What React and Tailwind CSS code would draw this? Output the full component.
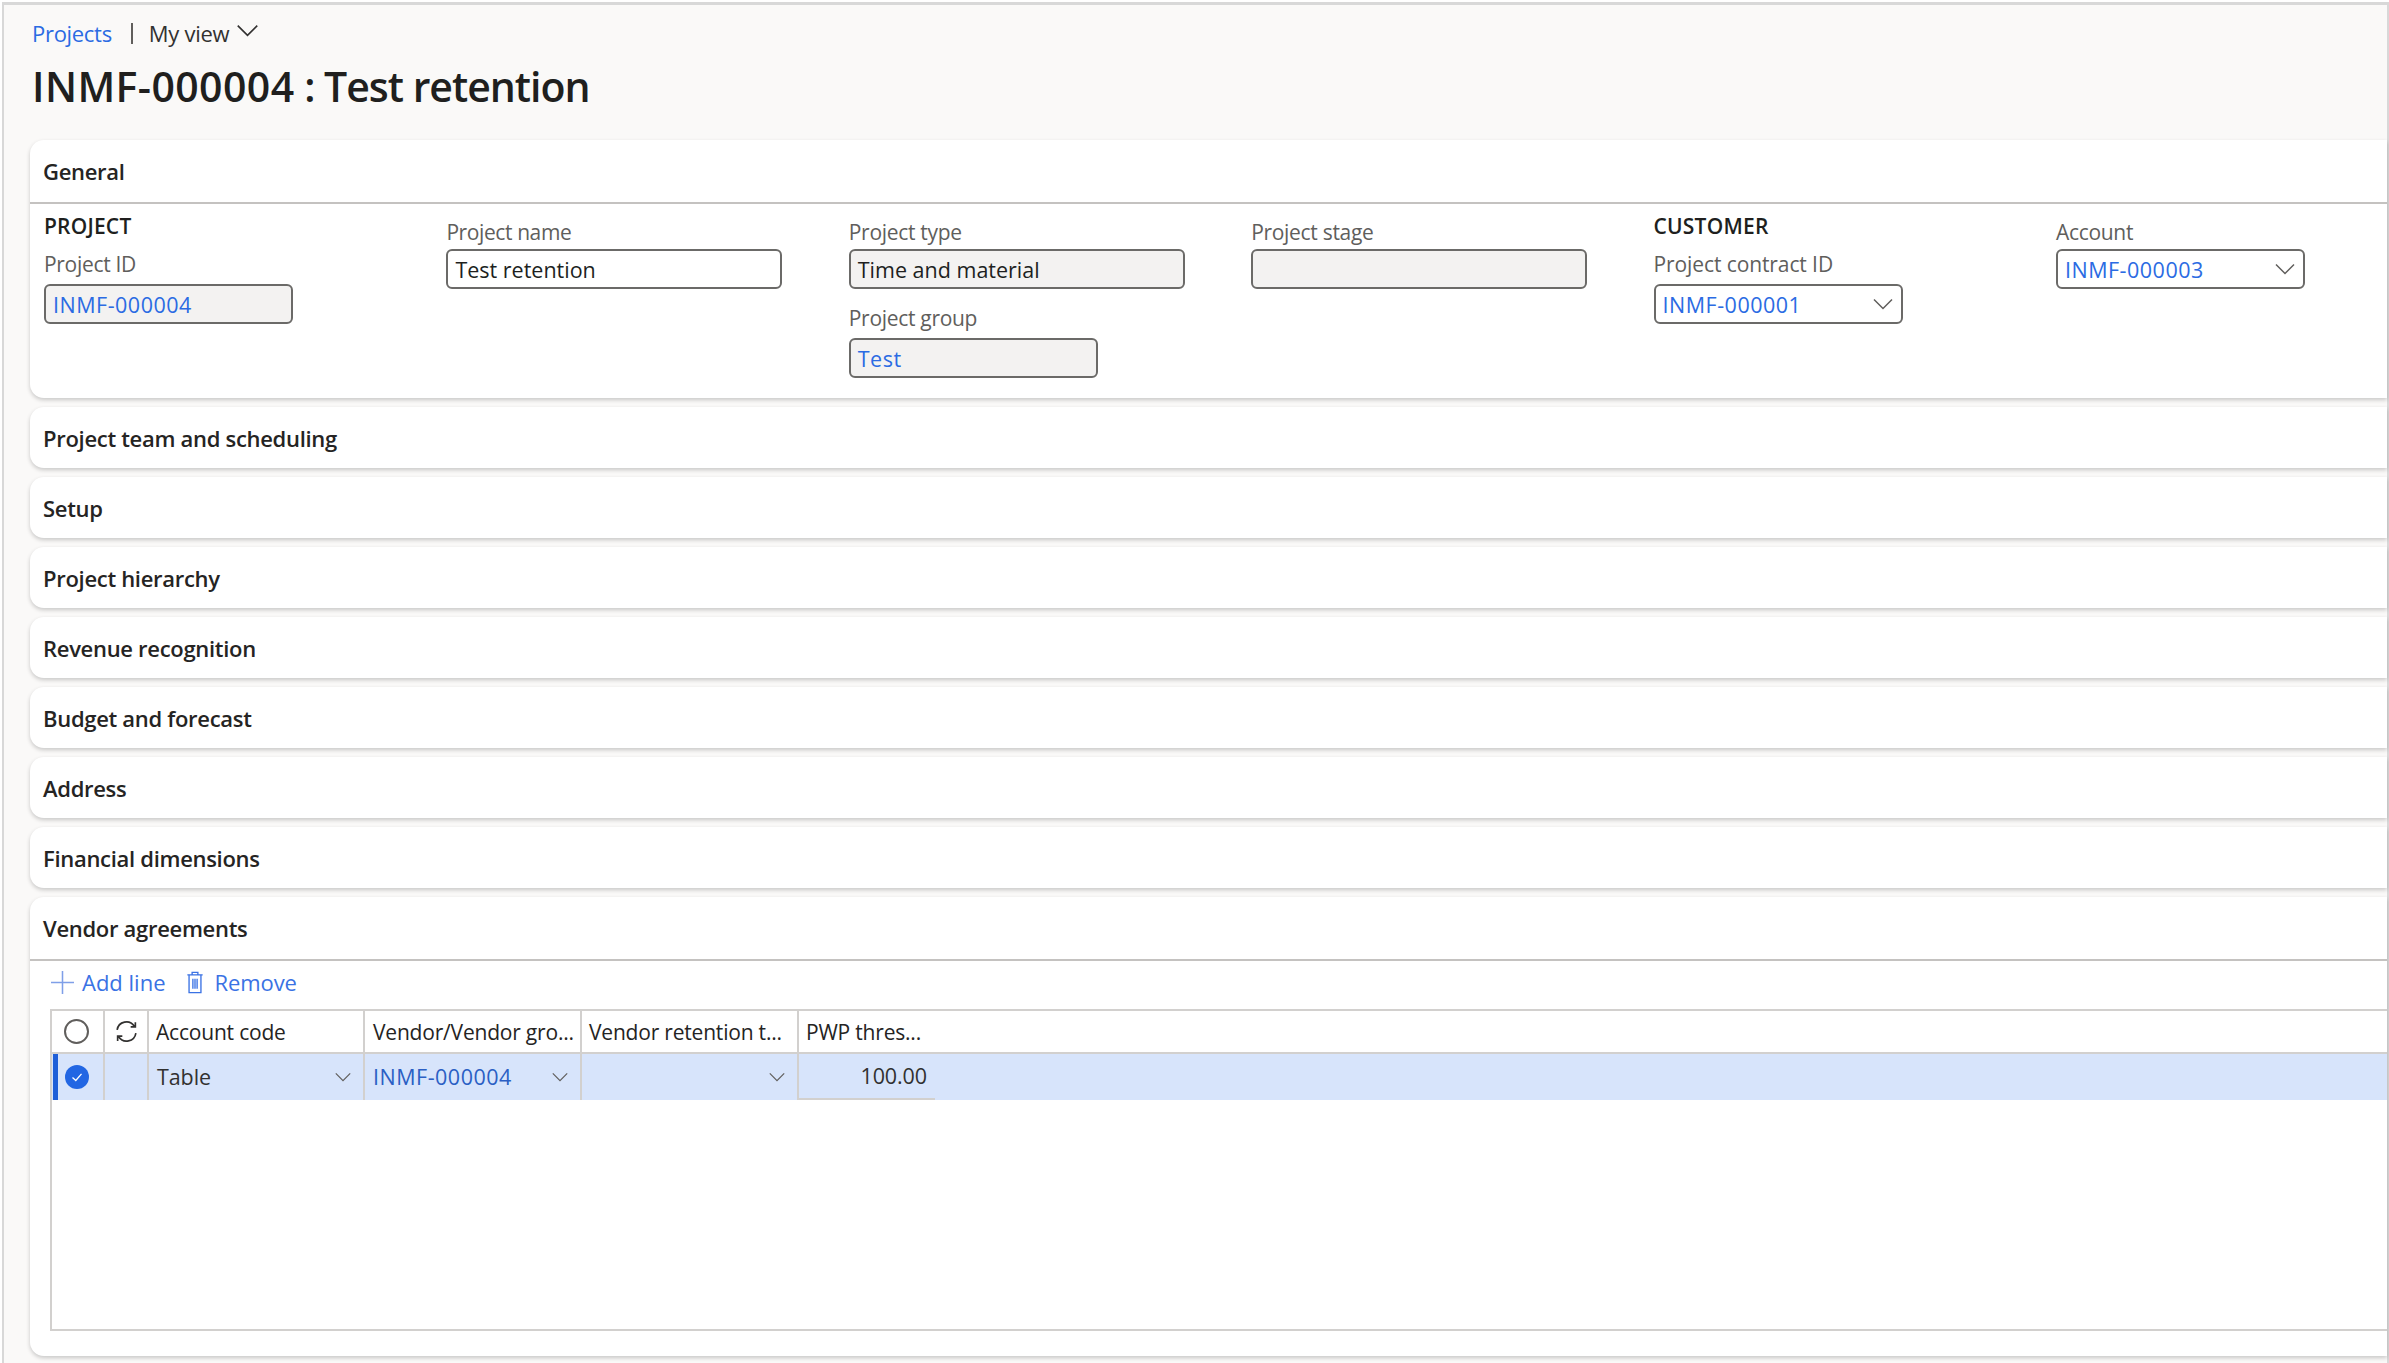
const sections = [
  'Project team and scheduling',
  'Setup',
  'Project hierarchy',
  'Revenue recognition',
  'Budget and forecast',
  'Address',
  'Financial dimensions',
];

function Chevron({ className }) {
  return (
    <svg viewBox="0 0 20 12" className={className} fill="none" stroke="currentColor" strokeWidth="1.5">
      <path d="M1 1.5 L10 10.5 L19 1.5" />
    </svg>
  );
}

function Field({ label, value, link, readOnly, select, wide, labelGap = 'mt-[7px]', labelClass = 'tracking-[-0.3px]' }) {
  return (
    <div>
      <div className={`h-[26px] text-[21px] leading-[26px] text-[#605e5c] ${labelClass}`}>{label}</div>
      <div
        className={`${labelGap} ${wide ? 'w-[336px]' : 'w-[249px]'} h-[40px] rounded-[6px] border-2 border-[#6b6a68] pl-[7px] pr-[8px] pt-[3px] flex items-center justify-between ${
          readOnly ? 'bg-[#f3f2f1]' : 'bg-white'
        }`}
      >
        <span className={`text-[21.5px] ${link ? 'text-[#2b6be3] tracking-[0.5px]' : 'text-[#201f1e]'}`}>{value}</span>
        {select && <Chevron className="w-[20px] h-[12px] -mt-[3px] text-[#605e5c]" />}
      </div>
    </div>
  );
}

function GroupTitle({ children }) {
  return <div className="h-[26px] text-[21px] leading-[26px] font-semibold tracking-[0.2px] text-[#201f1e]">{children}</div>;
}

function CardTitle({ children, border }) {
  return (
    <div className={`pl-[13px] flex items-center text-[22px] font-semibold tracking-[-0.3px] text-[#252423] ${border ? 'h-[64px] border-b-2 border-[#c4c2c0]' : 'h-[61px] pt-[2px]'}`}>
      {children}
    </div>
  );
}

function Card({ children, className = '' }) {
  return (
    <div className={`bg-white rounded-l-[14px] shadow-[0_2px_4px_rgba(0,0,0,0.2)] ${className}`}>{children}</div>
  );
}

function HeaderCell({ children, border = true, className = 'pl-[7px]' }) {
  return (
    <div className={`pt-[3px] flex items-center text-[21px] font-medium tracking-[-0.2px] text-[#252423] whitespace-nowrap ${className} ${border ? 'border-r-2 border-[#d2d0ce]' : ''}`}>
      {children}
    </div>
  );
}

function BodyCell({ children, border = true, className = '' }) {
  return (
    <div className={`flex items-center justify-between text-[21.5px] tracking-[-0.1px] text-[#323130] ${border ? 'border-r-2 border-[#d2d0ce]' : ''} ${className}`}>
      {children}
    </div>
  );
}

export default function App() {
  return (
    <div className="w-[2389px] h-[1363px] overflow-hidden bg-white pl-[2px] pt-[2px] font-['Open_Sans',sans-serif]">
      <div className="h-[1361px] bg-[#faf9f8] border-l-2 border-t-[3px] border-r-2 border-[#d8d8d8] pt-[14px]">
        <div className="pl-[28px] flex items-center h-[28px] text-[22px] tracking-[-0.3px] text-[#323130]">
          <span className="text-[#2b6be3]">Projects</span>
          <span className="ml-[19px] w-[2px] h-[21px] bg-[#605e5c]" />
          <span className="ml-[16px]">My view</span>
          <Chevron className="ml-[7px] w-[23px] h-[13px] -mt-[6px]" />
        </div>
        <h1 className="pl-[28px] mt-[11px] h-[56px] text-[41px] leading-[56px] font-semibold text-[#201f1e]">
          <span className="tracking-[0.4px]">INMF-000004</span>
          <span className="tracking-[-1px]"> : Test retention</span>
        </h1>
        <div className="ml-[26px] mt-[26px] flex flex-col gap-[9px]">
          <Card className="h-[258px]">
            <CardTitle border>General</CardTitle>
            <div className="pl-[14px] grid grid-cols-[repeat(6,402.4px)]">
              <div className="pt-[9px]">
                <GroupTitle>PROJECT</GroupTitle>
                <div className="mt-[12px]">
                  <Field label="Project ID" value="INMF-000004" link readOnly />
                </div>
              </div>
              <div className="pt-[15px]">
                <Field label="Project name" value="Test retention" wide labelGap="mt-[4px]" labelClass="tracking-[-0.4px]" />
              </div>
              <div className="pt-[15px]">
                <Field label="Project type" value="Time and material" readOnly wide labelGap="mt-[4px]" />
                <div className="mt-[16px]">
                  <Field label="Project group" value="Test" link readOnly />
                </div>
              </div>
              <div className="pt-[15px]">
                <Field label="Project stage" value="" readOnly wide labelGap="mt-[4px]" />
              </div>
              <div className="pt-[9px]">
                <GroupTitle>CUSTOMER</GroupTitle>
                <div className="mt-[12px]">
                  <Field label="Project contract ID" value="INMF-000001" link select labelClass="tracking-[-0.1px]" />
                </div>
              </div>
              <div className="pt-[15px]">
                <Field label="Account" value="INMF-000003" link select labelGap="mt-[4px]" />
              </div>
            </div>
          </Card>

          {sections.map((name) => (
            <Card key={name} className="h-[61px]">
              <CardTitle>{name}</CardTitle>
            </Card>
          ))}

          <Card className="h-[459px]">
            <CardTitle border>Vendor agreements</CardTitle>
            <div className="h-[48px] pl-[21px] pb-[6px] flex items-center text-[22px] text-[#3a72e4]">
              <svg viewBox="0 0 24 24" className="w-[23px] h-[23px]" fill="none" stroke="#7f9fe8" strokeWidth="1.6">
                <path d="M0 12H24M12 0V24" />
              </svg>
              <span className="ml-[8px]">Add line</span>
              <svg viewBox="0 0 18 24" className="ml-[20px] w-[18px] h-[23px]" fill="none" stroke="currentColor" strokeWidth="1.4">
                <path d="M1 4h16M6 4V1.5h6V4M2.8 4v18.5h12.4V4M6.8 8v10.5M9 8v10.5M11.2 8v10.5" />
              </svg>
              <span className="ml-[11px] tracking-[-0.1px]">Remove</span>
            </div>
            <div className="ml-[20px] h-[322px] border-2 border-r-0 border-[#d2d0ce]">
              <div className="h-[43px] grid grid-cols-[53px_44px_216px_217px_217px_136px_1fr] border-b-2 border-[#d2d0ce]">
                <div className="border-r-2 border-[#d2d0ce] pr-[3px] flex items-center justify-center">
                  <span className="w-[25px] h-[25px] rounded-full border-2 border-[#605e5c]" />
                </div>
                <div className="border-r-2 border-[#d2d0ce] flex items-center justify-center">
                  <svg viewBox="0 0 24 24" className="w-[25px] h-[25px]" fill="none" stroke="#323130" strokeWidth="1.6">
                    <path d="M3 10.5A9 9 0 0 1 19.5 7M20.5 3v4.5H16M21 13.5A9 9 0 0 1 4.5 17M3.5 21v-4.5H8" />
                  </svg>
                </div>
                <HeaderCell>Account code</HeaderCell>
                <HeaderCell className="pl-[8px]">Vendor/Vendor gro...</HeaderCell>
                <HeaderCell>Vendor retention t...</HeaderCell>
                <HeaderCell border={false}>PWP thres...</HeaderCell>
                <div />
              </div>
              <div className="h-[46px] grid grid-cols-[53px_44px_216px_217px_217px_136px_1fr] bg-[#d7e4fb]">
                <div className="border-r-2 border-[#d2d0ce] border-l-[5px] border-l-[#1f5fd8] ml-[1px] flex items-center justify-center pr-[7px]">
                  <span className="w-[24px] h-[24px] rounded-full bg-[#2266e3] flex items-center justify-center">
                    <svg viewBox="0 0 14 14" className="w-[14px] h-[14px]" fill="none" stroke="white" strokeWidth="1.3">
                      <path d="M2.5 7.5 L5.8 10.5 L11.5 3.8" />
                    </svg>
                  </span>
                </div>
                <div className="border-r-2 border-[#d2d0ce]" />
                <BodyCell className="pl-[8px] pr-[12px]">
                  Table
                  <Chevron className="w-[16px] h-[10px] text-[#605e5c]" />
                </BodyCell>
                <BodyCell className="pl-[8px] pr-[12px]">
                  <span className="text-[#2b5fc4] tracking-[0.5px]">INMF-000004</span>
                  <Chevron className="w-[16px] h-[10px] text-[#605e5c]" />
                </BodyCell>
                <BodyCell className="pl-[6px] pr-[12px]">
                  <span />
                  <Chevron className="w-[16px] h-[10px] text-[#605e5c]" />
                </BodyCell>
                <BodyCell border={false} className="pr-[8px] !justify-end border-b-2 border-[#d2d0ce]">100.00</BodyCell>
                <div />
              </div>
            </div>
          </Card>
        </div>
      </div>
    </div>
  );
}
